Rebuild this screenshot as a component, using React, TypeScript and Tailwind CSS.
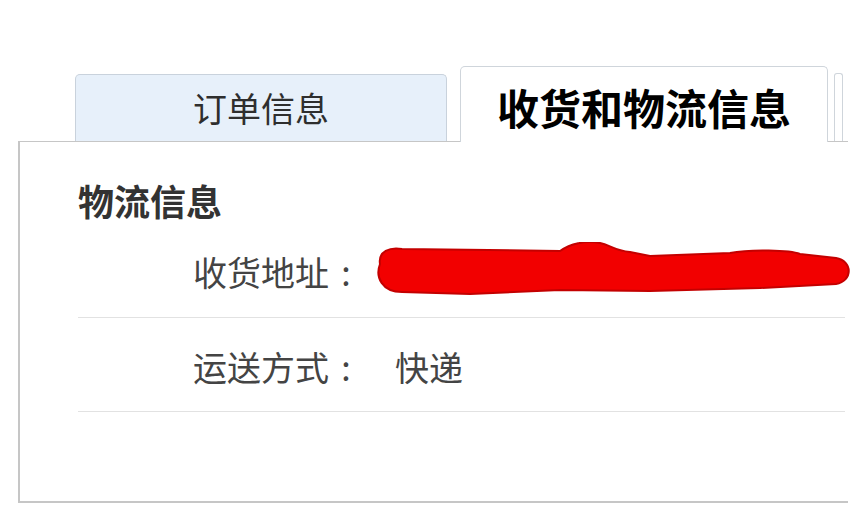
export default function App() {
  const font = { fontFamily: '"Noto Sans CJK SC", "Noto Sans", sans-serif' };

  return (
    <div className="w-[855px] h-[518px] bg-white overflow-hidden pt-[66px]" style={font}>
      {/* tabs */}
      <div className="flex items-end ml-[75px] -mb-px relative z-10">
        <div className="w-[372px] h-[67px] mb-px rounded-t-[5px] border border-b-0 border-[#c9d2dc] bg-[#e7f0fa] flex items-center justify-center text-[34px] leading-none text-[#2e2e2e]">
          订单信息
        </div>
        <div className="ml-[13px] w-[368px] h-[76px] rounded-t-[5px] border border-b-0 border-[#cfd5db] bg-white flex items-center justify-center pt-1 text-[42px] leading-none font-bold text-black">
          收货和物流信息
        </div>
        <div className="ml-[6px] w-[9px] h-[68px] mb-px rounded-t-[3px] border border-b-0 border-[#cfd5db] bg-white" />
      </div>

      {/* panel */}
      <div className="ml-[18px] w-[830px] border-l-2 border-t border-b-2 border-[#c6c6c6] pt-[40px] pb-[89px]">
        <div className="ml-[58px] text-[36px] leading-[36px] font-bold text-[#333]">物流信息</div>
        <div className="ml-[58px] w-[767px]">
          <div className="h-[100px] pt-2 flex items-center border-b border-[#e2e2e2]">
            <span className="ml-[115px] text-[34px] leading-[34px] text-[#444] shrink-0">
              收货地址<span className="inline-block w-[34px] text-center">:</span>
            </span>
            <svg
              className="ml-[7px] shrink-0"
              width="485"
              height="60"
              viewBox="370 242 485 60"
            >
              <path
                d="M380 264 C378 251 390 247 402 249 L560 251 C570 244 585 240 600 243 C610 245 615 251 630 252 L650 256 L730 253 C750 249 790 250 800 254 L836 258 C853 261 853 281 836 284 L760 288 L650 291 L560 290 L470 294 L402 292 C382 292 375 277 380 264 Z"
                fill="#f20000"
                stroke="#c40000"
                strokeWidth="2"
                strokeLinejoin="round"
              />
            </svg>
          </div>
          <div className="h-[94px] pt-[5px] flex items-center border-b border-[#e2e2e2]">
            <span className="ml-[115px] text-[34px] leading-[34px] text-[#444] shrink-0">
              运送方式<span className="inline-block w-[34px] text-center">:</span>
            </span>
            <span className="ml-[32px] text-[34px] leading-[34px] text-[#444]">快递</span>
          </div>
        </div>
      </div>
    </div>
  );
}
